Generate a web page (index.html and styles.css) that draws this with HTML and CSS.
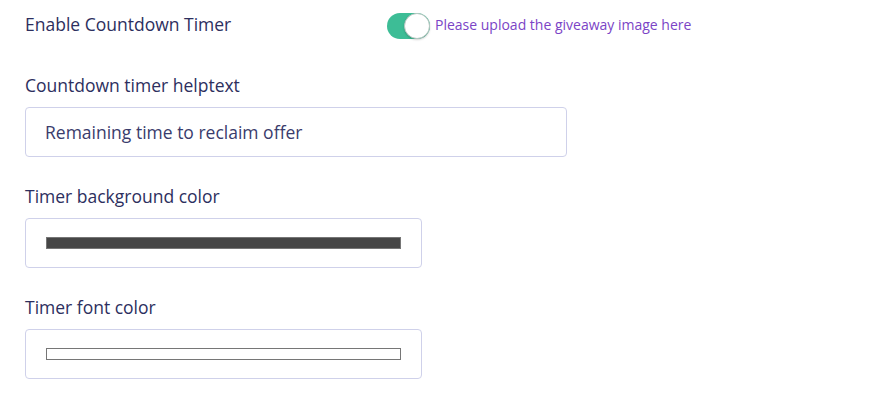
FILE: index.html
```html
<!DOCTYPE html>
<html>
<head>
<meta charset="utf-8">
<link rel="stylesheet" href="styles.css">
</head>
<body>
<div class="form">
  <div class="toggle-row">
    <label class="label toggle-label">Enable Countdown Timer</label>
    <span class="switch"><span class="knob"></span></span>
    <span class="hint">Please upload the giveaway image here</span>
  </div>
  <div class="field">
    <label class="label">Countdown timer helptext</label>
    <div class="box wide"><span class="value">Remaining time to reclaim offer</span></div>
  </div>
  <div class="field">
    <label class="label">Timer background color</label>
    <div class="box narrow"><span class="swatch dark"></span></div>
  </div>
  <div class="field">
    <label class="label">Timer font color</label>
    <div class="box narrow"><span class="swatch light"></span></div>
  </div>
</div>
</body>
</html>
```
FILE: styles.css
```css
html, body {
  margin: 0;
  padding: 0;
  background: #ffffff;
}
body {
  font-family: "Open Sans", "Noto Sans", sans-serif;
  color: #2d2f5e;
}
.form {
  padding: 12px 0 0 25px;
  display: flex;
  flex-direction: column;
  gap: 27px;
}
.label {
  display: block;
  font-size: 17.5px;
  line-height: 24px;
  color: #2d2f5e;
}
.toggle-row {
  display: flex;
  align-items: flex-start;
  height: 34px;
}
.toggle-label {
  width: 362px;
}
.switch {
  position: relative;
  display: block;
  width: 43px;
  height: 26px;
  margin-top: 1px;
  border-radius: 13px;
  background: #3dbd96;
}
.knob {
  position: absolute;
  right: 0;
  top: 0;
  width: 24px;
  height: 24px;
  border-radius: 50%;
  background: #ffffff;
  border: 1px solid #b9c7c2;
  box-shadow: 0 1px 2px rgba(0,0,0,0.18);
}
.hint {
  margin-left: 5px;
  margin-top: 3px;
  font-size: 14px;
  line-height: 20px;
  color: #7b44c6;
}
.field {
  display: flex;
  flex-direction: column;
  gap: 10px;
}
.box {
  box-sizing: border-box;
  height: 50px;
  border: 1px solid #cfd1ea;
  border-radius: 4px;
  display: flex;
  align-items: center;
  padding: 0 20px 0 19px;
}
.wide { width: 542px; }
.narrow { width: 397px; }
.value {
  font-size: 17.5px;
  color: #3a3c6c;
}
.swatch {
  display: block;
  box-sizing: border-box;
  width: 100%;
  height: 12px;
  margin-left: 1px;
  border: 1px solid #767676;
}
.swatch.dark { background: #464646; }
.swatch.light { background: #ffffff; }
```
